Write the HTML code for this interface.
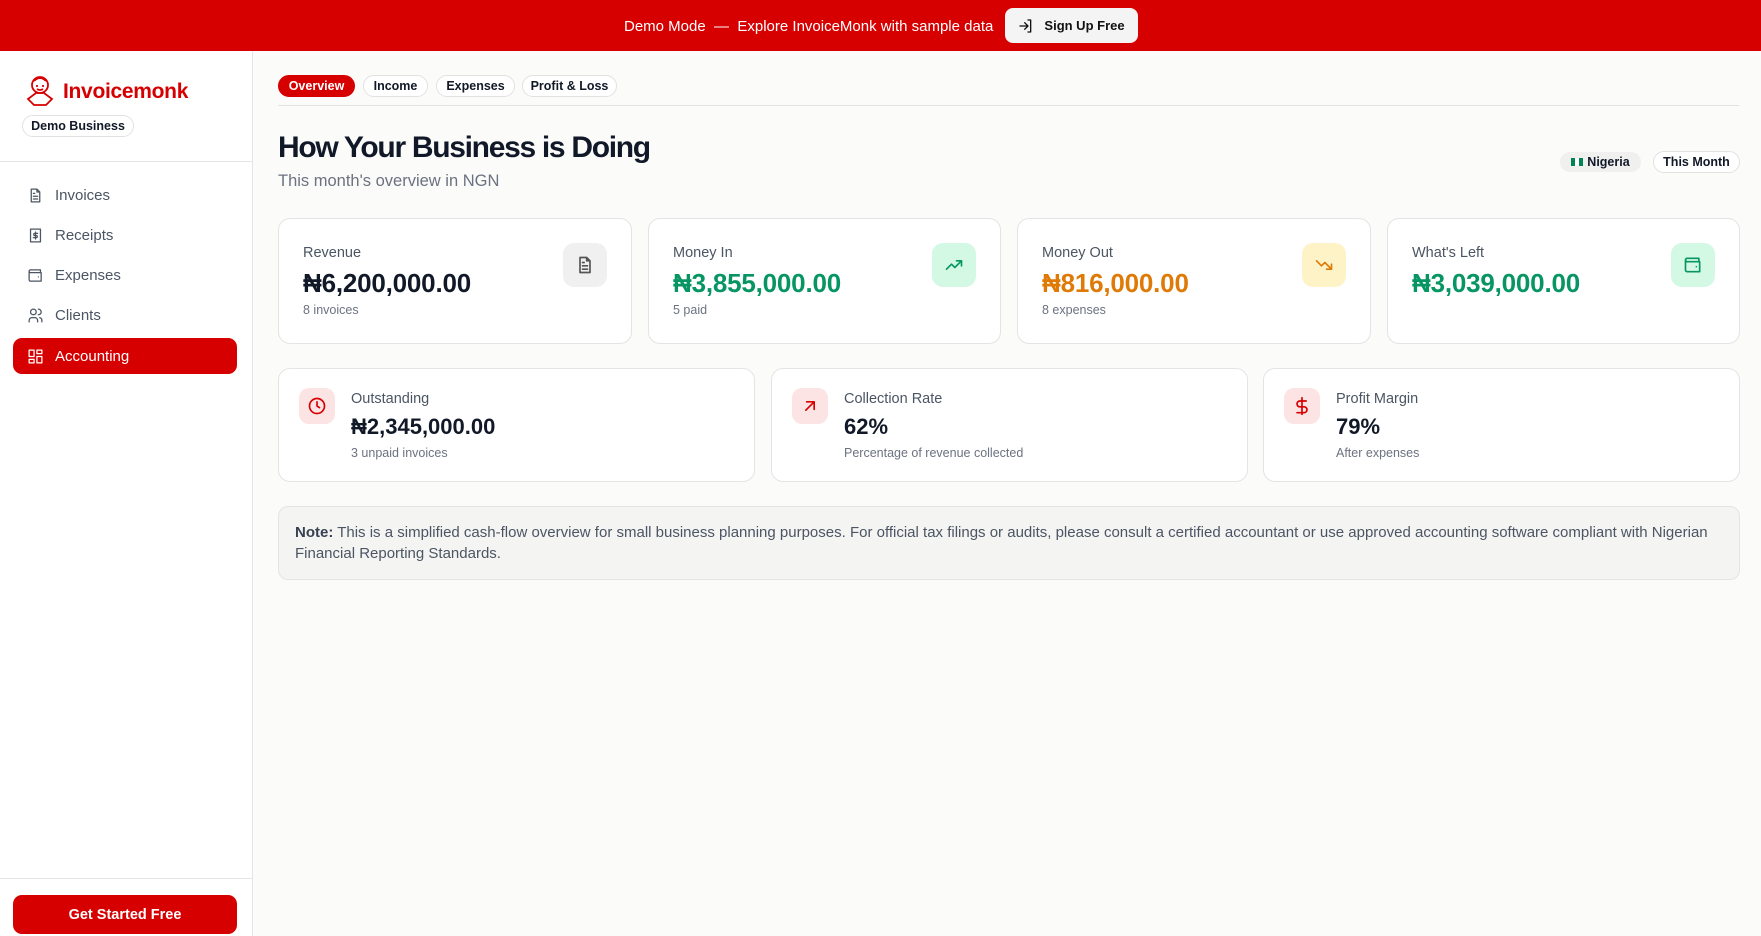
<!DOCTYPE html>
<html><head><meta charset="utf-8"><style>
*{box-sizing:border-box;margin:0;padding:0}
body{width:1761px;height:936px;overflow:hidden;background:#fbfbfa;font-family:"Liberation Sans",Arial,sans-serif;color:#111827;position:relative}
.a{position:absolute}
.top{left:0;top:0;width:1761px;height:51px;background:#d60000;color:#fff;font-size:15px}
.side{left:0;top:51px;width:253px;height:885px;background:#fff;border-right:1px solid #e5e5e5}
.nav{left:13px;width:224px;height:36px;border-radius:9px;display:flex;align-items:center;padding-left:14px;font-size:15px;color:#4b5563;gap:11px}
.nav svg{width:17px;height:17px;fill:none;stroke:currentColor;stroke-width:1.8;stroke-linecap:round;stroke-linejoin:round}
.tab{top:75px;height:22px;border:1px solid #e2e2e2;border-radius:11px;font-size:12.5px;font-weight:bold;display:flex;align-items:center;justify-content:center;background:#fff}
.card{background:#fff;border:1px solid #e4e4e4;border-radius:12px}
.lbl{font-size:14.5px;color:#4b5563}
.val{font-size:26px;font-weight:bold;letter-spacing:-0.2px}
.sub{font-size:12.5px;color:#6b7280}
.ib{width:44px;height:44px;border-radius:11px;display:flex;align-items:center;justify-content:center}
.ib svg,.ib2 svg{width:20px;height:20px;fill:none;stroke:currentColor;stroke-width:2;stroke-linecap:round;stroke-linejoin:round}
.ib2{width:36px;height:36px;border-radius:10px;background:#fde4e4;color:#d60000;display:flex;align-items:center;justify-content:center}
.v2{font-size:22px;font-weight:bold}
</style></head><body>
<div class="a top">
<div class="a" style="left:624px;top:18px">Demo Mode &nbsp;—&nbsp; Explore InvoiceMonk with sample data</div>
<div class="a" style="left:1005px;top:8px;width:133px;height:35px;background:#f4f4f4;border-radius:8px;color:#111;font-size:13px;font-weight:bold;display:flex;align-items:center;justify-content:center;gap:10px">
<svg width="16" height="16" viewBox="0 0 24 24" fill="none" stroke="#111" stroke-width="2" stroke-linecap="round" stroke-linejoin="round"><path d="M15 3h4v18h-4M10 17l5-5-5-5M15 12H3"/></svg>Sign Up Free</div>
</div>
<div class="a side">
<svg class="a" style="left:22px;top:22px" width="36" height="36" viewBox="0 0 36 36" fill="none" stroke="#d60000" stroke-width="1.8"><circle cx="18" cy="12" r="8"/><path d="M12 8q6-6 12 0M14 13h2M20 13h2M15 16q3 2 6 0M6 26l8-6h8l8 6-6 6h-12z"/></svg>
<div class="a" style="left:63px;top:29px;font-size:21px;font-weight:bold;color:#d60000;letter-spacing:-0.3px">Invoicemonk</div>
<div class="a" style="left:22px;top:64px;width:112px;height:22px;border:1px solid #e2e2e2;border-radius:11px;font-size:12.5px;font-weight:bold;display:flex;align-items:center;justify-content:center">Demo Business</div>
<div class="a" style="left:0;top:110px;width:253px;border-top:1px solid #e5e5e5"></div>
<div class="a nav" style="top:126px"><svg viewBox="0 0 24 24"><path d="M14 3H6v18h12V7zM14 3v4h4M9 13h6M9 17h6M9 9h2"/></svg>Invoices</div>
<div class="a nav" style="top:166px"><svg viewBox="0 0 24 24"><path d="M5 3h14v18H5zM12 7v10M15 9h-4a1.5 1.5 0 000 3h2a1.5 1.5 0 010 3H9"/></svg>Receipts</div>
<div class="a nav" style="top:206px"><svg viewBox="0 0 24 24"><path d="M19 7V4H5a2 2 0 000 4h15v12H5a2 2 0 01-2-2V6M16 14h.01"/></svg>Expenses</div>
<div class="a nav" style="top:246px"><svg viewBox="0 0 24 24"><circle cx="9" cy="7" r="4"/><path d="M3 21v-2a4 4 0 014-4h4a4 4 0 014 4v2M16 3a4 4 0 010 8M21 21v-2a4 4 0 00-3-4"/></svg>Clients</div>
<div class="a nav" style="top:287px;background:#d60000;color:#fff"><svg viewBox="0 0 24 24"><rect x="3" y="3" width="7" height="9"/><rect x="14" y="3" width="7" height="5"/><rect x="14" y="12" width="7" height="9"/><rect x="3" y="16" width="7" height="5"/></svg>Accounting</div>
<div class="a" style="left:0;top:827px;width:253px;border-top:1px solid #e5e5e5"></div>
<div class="a" style="left:13px;top:844px;width:224px;height:39px;background:#d60000;border-radius:9px;color:#fff;font-size:14.5px;font-weight:bold;display:flex;align-items:center;justify-content:center">Get Started Free</div>
</div>

<div class="a tab" style="left:278px;width:77px;background:#d60000;color:#fff;border-color:#d60000">Overview</div>
<div class="a tab" style="left:363px;width:65px">Income</div>
<div class="a tab" style="left:436px;width:79px">Expenses</div>
<div class="a tab" style="left:522px;width:95px">Profit &amp; Loss</div>
<div class="a" style="left:278px;top:105px;width:1461px;border-top:1px solid #e2e2e2"></div>

<div class="a" style="left:278px;top:131px;font-size:30px;font-weight:bold;letter-spacing:-1.3px">How Your Business is Doing</div>
<div class="a" style="left:278px;top:172px;font-size:16.5px;color:#6b7280">This month's overview in NGN</div>
<div class="a" style="left:1560px;top:152px;width:81px;height:20px;background:#f0f0ef;border-radius:10px;font-size:12.5px;font-weight:bold;display:flex;align-items:center;justify-content:center;gap:4px"><span style="display:inline-block;width:12px;height:8px;background:linear-gradient(90deg,#008751 33%,#fff 33% 66%,#008751 66%)"></span>Nigeria</div>
<div class="a" style="left:1653px;top:151px;width:87px;height:22px;border:1px solid #e2e2e2;border-radius:11px;font-size:12.5px;font-weight:bold;display:flex;align-items:center;justify-content:center;background:#fff">This Month</div>

<div class="a card" style="left:278px;top:218px;width:354px;height:126px">
<div class="a lbl" style="left:24px;top:26px">Revenue</div>
<div class="a val" style="left:24px;top:49px">₦6,200,000.00</div>
<div class="a sub" style="left:24px;top:84px">8 invoices</div>
<div class="a ib" style="left:284px;top:24px;background:#f0f0f0;color:#555"><svg viewBox="0 0 24 24"><path d="M14 3H6v18h12V7zM14 3v4h4M9 13h6M9 17h6M9 9h2"/></svg></div>
</div>
<div class="a card" style="left:648px;top:218px;width:353px;height:126px">
<div class="a lbl" style="left:24px;top:26px">Money In</div>
<div class="a val" style="left:24px;top:49px;color:#079663">₦3,855,000.00</div>
<div class="a sub" style="left:24px;top:84px">5 paid</div>
<div class="a ib" style="left:283px;top:24px;background:#d3f8e4;color:#079663"><svg viewBox="0 0 24 24"><path d="M3 17l6-6 4 4 8-8M15 7h6v6"/></svg></div>
</div>
<div class="a card" style="left:1017px;top:218px;width:354px;height:126px">
<div class="a lbl" style="left:24px;top:26px">Money Out</div>
<div class="a val" style="left:24px;top:49px;color:#df7a06">₦816,000.00</div>
<div class="a sub" style="left:24px;top:84px">8 expenses</div>
<div class="a ib" style="left:284px;top:24px;background:#fef2c7;color:#df7a06"><svg viewBox="0 0 24 24"><path d="M3 7l6 6 4-4 8 8M15 17h6v-6"/></svg></div>
</div>
<div class="a card" style="left:1387px;top:218px;width:353px;height:126px">
<div class="a lbl" style="left:24px;top:26px">What's Left</div>
<div class="a val" style="left:24px;top:49px;color:#079663">₦3,039,000.00</div>
<div class="a ib" style="left:283px;top:24px;background:#d3f8e4;color:#079663"><svg viewBox="0 0 24 24"><path d="M19 7V4H5a2 2 0 000 4h15v12H5a2 2 0 01-2-2V6M16 14h.01"/></svg></div>
</div>

<div class="a card" style="left:278px;top:368px;width:477px;height:114px">
<div class="a ib2" style="left:20px;top:19px"><svg viewBox="0 0 24 24"><circle cx="12" cy="12" r="9"/><path d="M12 7v5l3 2"/></svg></div>
<div class="a lbl" style="left:72px;top:22px">Outstanding</div>
<div class="a v2" style="left:72px;top:45px">₦2,345,000.00</div>
<div class="a sub" style="left:72px;top:77px">3 unpaid invoices</div>
</div>
<div class="a card" style="left:771px;top:368px;width:477px;height:114px">
<div class="a ib2" style="left:20px;top:19px"><svg viewBox="0 0 24 24"><path d="M7 17L17 7M8 7h9v9"/></svg></div>
<div class="a lbl" style="left:72px;top:22px">Collection Rate</div>
<div class="a v2" style="left:72px;top:45px">62%</div>
<div class="a sub" style="left:72px;top:77px">Percentage of revenue collected</div>
</div>
<div class="a card" style="left:1263px;top:368px;width:477px;height:114px">
<div class="a ib2" style="left:20px;top:19px"><svg viewBox="0 0 24 24"><path d="M12 2v20M17 6H9.5a3.5 3.5 0 000 7h5a3.5 3.5 0 010 7H6"/></svg></div>
<div class="a lbl" style="left:72px;top:22px">Profit Margin</div>
<div class="a v2" style="left:72px;top:45px">79%</div>
<div class="a sub" style="left:72px;top:77px">After expenses</div>
</div>

<div class="a" style="left:278px;top:506px;width:1462px;height:74px;background:#f4f4f3;border:1px solid #e4e4e4;border-radius:10px;padding:15px 16px;font-size:15px;line-height:21px;color:#4b5563"><b style="color:#374151">Note:</b> This is a simplified cash-flow overview for small business planning purposes. For official tax filings or audits, please consult a certified accountant or use approved accounting software compliant with Nigerian Financial Reporting Standards.</div>
</body></html>
